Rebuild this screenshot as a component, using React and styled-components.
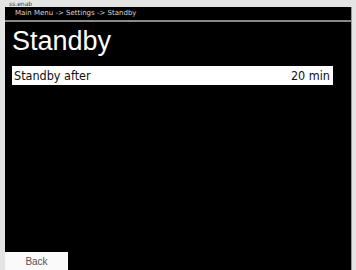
import React from "react";
import styled, { createGlobalStyle } from "styled-components";

const GlobalStyle = createGlobalStyle`
  html, body { margin: 0; padding: 0; background: #e6e6e6; }
  body { width: 356px; height: 270px; overflow: hidden; font-family: "DejaVu Sans", "Liberation Sans", sans-serif; }
`;

const Frame = styled.div`
  width: 356px;
  height: 270px;
  background: #e4e4e4;
  display: flex;
  flex-direction: column;
  padding: 0 4px 0 5px;
  box-sizing: border-box;
`;

const TopLabel = styled.div`
  height: 7px;
  font-size: 6px;
  line-height: 7px;
  color: #333;
  padding-left: 4px;
`;

const Screen = styled.div`
  flex: 1;
  background: #000;
  display: flex;
  flex-direction: column;
  border-right: 1px solid #9a9a9a;
`;

const Crumbs = styled.div`
  height: 13px;
  border-bottom: 2px solid #8a8a8a;
  color: #d8d8d8;
  font-size: 7px;
  line-height: 13px;
  padding-left: 10px;
`;

const Title = styled.h1`
  margin: 4px 0 0 7px;
  font-family: "Liberation Sans", Arial, sans-serif;
  font-weight: 400;
  font-size: 27px;
  line-height: 30px;
  color: #fff;
`;

const Row = styled.div`
  margin: 10px 18px 0 7px;
  height: 19px;
  background: #fff;
  display: flex;
  align-items: center;
  justify-content: space-between;
  padding: 0 3px 0 2px;
  font-family: "DejaVu Sans Condensed", "DejaVu Sans", sans-serif;
  font-size: 12.5px;
  color: #111;
`;

const Spacer = styled.div`
  flex: 1;
`;

const BackButton = styled.div`
  width: 63px;
  height: 18px;
  background: #fafafa;
  color: #555;
  font-family: "Liberation Sans", Arial, sans-serif;
  font-size: 10px;
  line-height: 19px;
  text-align: center;
`;

export default function App() {
  return (
    <>
      <GlobalStyle />
      <Frame>
        <TopLabel>ss.enab</TopLabel>
        <Screen>
          <Crumbs>Main Menu -&gt; Settings -&gt; Standby</Crumbs>
          <Title>Standby</Title>
          <Row>
            <span>Standby after</span>
            <span>20 min</span>
          </Row>
          <Spacer />
          <BackButton>Back</BackButton>
        </Screen>
      </Frame>
    </>
  );
}
